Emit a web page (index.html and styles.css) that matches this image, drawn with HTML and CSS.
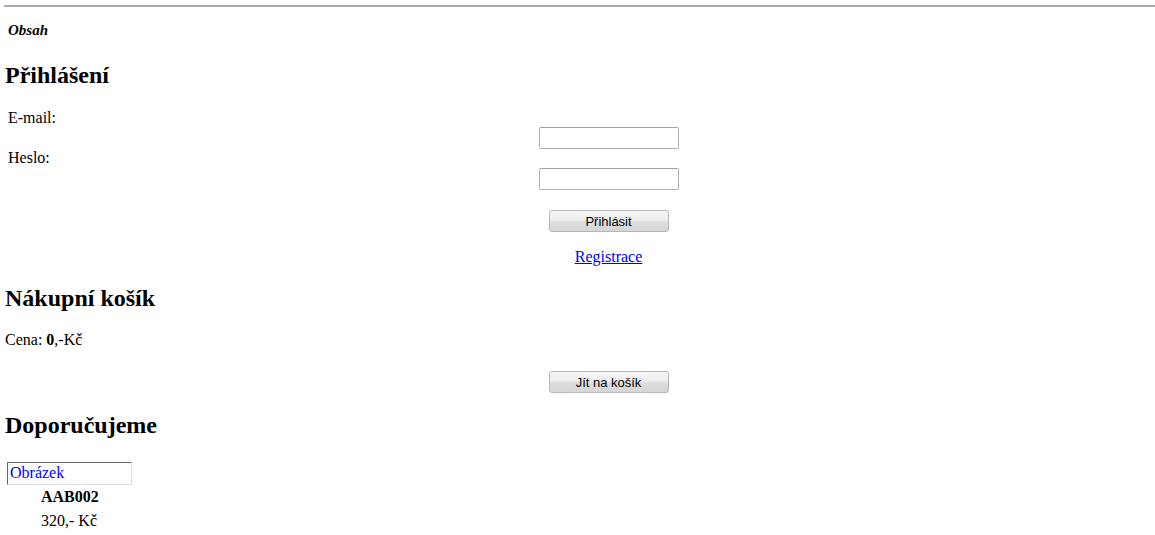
FILE: index.html
```html
<!DOCTYPE html>
<html lang="cs">

<head>
    <meta charset="UTF-8">
    <title>Obsah</title>
    <link rel="stylesheet" href="styles.css">
</head>

<body>
    <hr class="top-rule">

    <p class="toc"><em>Obsah</em></p>

    <h2 class="section-title">Přihlášení</h2>

    <form class="login-form" onsubmit="return false;">
        <div class="login-labels">
            <label for="email">E-mail:</label>
            <label for="heslo">Heslo:</label>
        </div>
        <div class="login-fields">
            <input type="text" id="email" class="text-input">
            <input type="password" id="heslo" class="text-input">
            <button type="submit" class="plain-button">Přihlásit</button>
            <a href="#" class="register-link">Registrace</a>
        </div>
    </form>

    <h2 class="section-title cart-title">Nákupní košík</h2>

    <p class="price-line">Cena: <strong>0</strong>,-Kč</p>

    <div class="cart-actions">
        <button type="button" class="plain-button">Jít na košík</button>
    </div>

    <h2 class="section-title tip-title">Doporučujeme</h2>

    <div class="product">
        <div class="image-placeholder">Obrázek</div>
        <div class="product-code">AAB002</div>
        <div class="product-price">320,- Kč</div>
    </div>
</body>

</html>
```

FILE: styles.css
```css
body {
    margin: 0;
    font-family: "Liberation Serif", "Times New Roman", serif;
    font-size: 16px;
    line-height: 20px;
    color: #000000;
    background: #ffffff;
}

.top-rule {
    margin: 5px 0 0 4px;
    height: 2px;
    border: none;
    background-color: #aaaaaa;
}

.toc {
    margin: 14px 0 0 8px;
    font-size: 15px;
    line-height: 18px;
    font-weight: bold;
}

.section-title {
    margin: 22px 0 0 5px;
    font-size: 24px;
    line-height: 28px;
    font-weight: bold;
}

.login-form {
    display: grid;
    grid-template-columns: 62px 1fr;
    margin-top: 19px;
}

.login-labels {
    display: flex;
    flex-direction: column;
    gap: 20px;
    padding-left: 8px;
}

.login-fields {
    display: flex;
    flex-direction: column;
    align-items: center;
    padding-top: 19px;
}

.text-input {
    box-sizing: border-box;
    width: 140px;
    height: 22px;
    margin: 0 0 19px;
    padding: 1px 3px;
    border: 1px solid #abb0b8;
    border-top-color: #9ea3ab;
    border-radius: 2px;
    background: #ffffff;
    font-family: "Liberation Sans", Arial, sans-serif;
    font-size: 12px;
}

.text-input + .text-input {
    margin-bottom: 20px;
}

.plain-button {
    box-sizing: border-box;
    width: 120px;
    height: 22px;
    padding: 0;
    border: 1px solid #b7b7b7;
    border-radius: 3px;
    background: linear-gradient(#f7f7f7 0%, #ededed 45%, #dddddd 55%, #d6d6d6 100%);
    font-family: "Liberation Sans", Arial, sans-serif;
    font-size: 13px;
    color: #000000;
    cursor: pointer;
}

.register-link {
    margin-top: 15px;
    color: #0000ee;
    line-height: 20px;
}

.cart-title {
    margin-top: 17px;
}

.price-line {
    margin: 18px 0 0 5px;
}

.cart-actions {
    display: flex;
    justify-content: center;
    padding-left: 62px;
    margin-top: 21px;
}

.tip-title {
    margin-top: 18px;
}

.product {
    margin: 23px 0 0 7px;
}

.image-placeholder {
    box-sizing: border-box;
    width: 125px;
    height: 23px;
    padding: 0 2px;
    border: 1px solid #dddddd;
    border-top-color: #666666;
    border-left-color: #666666;
    color: #0000ff;
    line-height: 20px;
}

.product-code,
.product-price {
    margin-left: 34px;
    line-height: 24px;
}

.product-code {
    font-weight: bold;
}
```
